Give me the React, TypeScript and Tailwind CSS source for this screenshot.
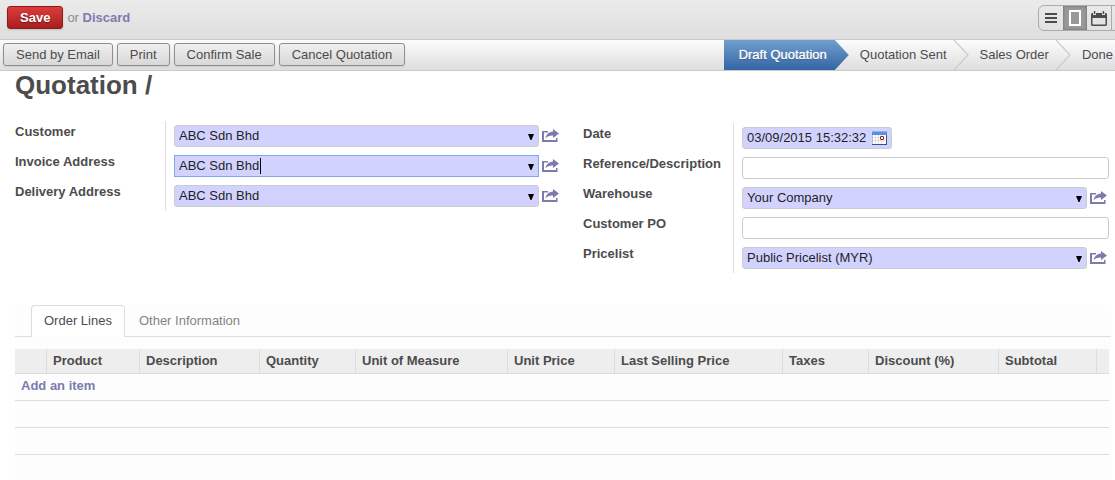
import React from "react";

function OpenIcon() {
  return (
    <svg viewBox="0 0 17 13" className="h-[13px] w-[17px]" fill="#7c7bad" aria-hidden="true">
      <path d="M0 2h6v1.500H2V11h12V9h1.500v4H0z" />
      <path d="M11 0l6 4.500-6 4.500V6.500C8 6.300 5.500 7 3.500 9.500 4 5.500 7 2.800 11 2.500z" />
    </svg>
  );
}

function CalendarIcon() {
  return (
    <svg viewBox="0 0 15 14" className="h-[14px] w-[15px]" aria-hidden="true">
      <rect width="15" height="14" fill="#35557f" />
      <rect width="14" height="13" fill="#a9bfe4" />
      <rect width="15" height="4" fill="#5b8fe0" />
      <rect width="15" height="1" fill="#8db4f0" />
      <rect x="1" y="4" width="13" height="9" fill="#fff" />
      <path d="M1 6.500h12M1 9.500h12M3.500 4v9M6.500 4v9M9.500 4v9" stroke="#dedede" />
      <rect x="8.500" y="5.500" width="3" height="3" rx="0.500" fill="#fff" stroke="#8c1c1c" />
    </svg>
  );
}

type FieldProps = { id: string; label: string; children: React.ReactNode };

function Field({ id, label, children }: FieldProps) {
  return (
    <div className="flex h-[30px]">
      <label htmlFor={id} className="w-[150px] shrink-0 font-bold leading-[22px]">
        {label}
      </label>
      <div className="flex min-w-0 flex-1 border-l border-[#dddddd] pl-2 pt-1">{children}</div>
    </div>
  );
}

function Relation({ id, label, value, editing = false }: { id: string; label: string; value: string; editing?: boolean }) {
  return (
    <Field id={id} label={label}>
      <div className="relative h-[22px] min-w-0 flex-1">
        {editing ? (
          <>
            <input
              id={id}
              role="combobox"
              aria-expanded="false"
              defaultValue={value}
              className="block h-[22px] w-full border border-[#80a8e8] bg-[#d2d2ff] px-1 pb-[2px] text-[#1f1f1f] outline-none"
            />
            <span className="absolute left-[86px] top-[3px] h-4 w-px bg-black" />
          </>
        ) : (
          <select
            id={id}
            defaultValue={value}
            className="block h-[22px] w-full appearance-none rounded-[3px] border border-[#cccccc] bg-[#d2d2ff] px-1 text-[#1f1f1f] outline-none"
          >
            <option>{value}</option>
          </select>
        )}
        <svg viewBox="0 0 6 6" className="pointer-events-none absolute right-[5px] top-[9px] size-[6px]" aria-hidden="true">
          <path d="M0 0h6L3.500 6h-1z" fill="#000" />
        </svg>
      </div>
      <button type="button" aria-label={`Open ${label}`} className="flex h-[22px] w-[22px] shrink-0 items-start pl-[3px] pt-1">
        <OpenIcon />
      </button>
    </Field>
  );
}

function TextField({ id, label }: { id: string; label: string }) {
  return (
    <Field id={id} label={label}>
      <input id={id} type="text" className="h-[22px] min-w-0 flex-1 rounded-[3px] border border-[#cccccc] bg-white px-1 outline-none" />
    </Field>
  );
}

const actions = ["Send by Email", "Print", "Confirm Sale", "Cancel Quotation"];

function Chevron() {
  return (
    <svg viewBox="0 0 16 30" className="h-[30px] w-4 shrink-0" fill="none" aria-hidden="true">
      <path d="M1 0L15 15L1 30" stroke="#cacaca" strokeWidth="1.200" />
    </svg>
  );
}

const columns = [
  { title: "", width: "w-[32px]" },
  { title: "Product", width: "w-[93px]" },
  { title: "Description", width: "w-[120px]" },
  { title: "Quantity", width: "w-[96px]" },
  { title: "Unit of Measure", width: "w-[152px]" },
  { title: "Unit Price", width: "w-[107px]" },
  { title: "Last Selling Price", width: "w-[168px]" },
  { title: "Taxes", width: "w-[86px]" },
  { title: "Discount (%)", width: "w-[130px]" },
  { title: "Subtotal", width: "w-[98px]" },
  { title: "", width: "w-[12px]" },
];

export default function App() {
  return (
    <div className="min-h-screen overflow-x-hidden bg-white font-['Liberation_Sans',Arial,sans-serif] text-[13px] leading-4 text-[#4c4c4c]">
      <header className="flex h-10 justify-between overflow-hidden border-b border-[#cacaca] bg-linear-to-b from-[#ebebeb] to-[#dedede] pl-[7px]">
        <div className="flex items-start gap-1 pt-[6px]">
          <button
            type="button"
            className="h-[23px] rounded-[3px] border border-[#8f1a1a] bg-linear-to-b from-[#dc3c3c] to-[#a81e1e] px-3 font-bold leading-[21px] text-white shadow-[0_1px_2px_rgba(0,0,0,0.15)] [text-shadow:0_1px_1px_rgba(0,0,0,0.4)]"
          >
            Save
          </button>
          <span className="leading-[23px] text-[#8d8d8d]">
            or{" "}
            <a href="#discard" className="font-bold text-[#7c7bad]">
              Discard
            </a>
          </span>
        </div>
        <div className="-mr-[21px] mt-[5px] flex h-[26px] overflow-hidden rounded-l-[6px] border border-[#ababab]">
          <button type="button" aria-label="List" className="flex w-6 items-center justify-center">
            <svg viewBox="0 0 12 10" className="h-[10px] w-3" fill="#4c4c4c" aria-hidden="true">
              <path d="M0 0h12v2H0zM0 4h12v2H0zM0 8h12v2H0z" />
            </svg>
          </button>
          <button type="button" aria-label="Form" aria-pressed="true" className="flex w-6 items-center justify-center bg-[#999999] shadow-[inset_0_0_3px_#666666]">
            <svg viewBox="0 0 12 16" className="h-4 w-3" fill="none" aria-hidden="true">
              <rect x="1" y="1" width="10" height="14" stroke="#fff" strokeWidth="2" />
            </svg>
          </button>
          <button type="button" aria-label="Calendar" className="flex w-6 items-center justify-center">
            <svg viewBox="0 0 16 15" className="h-[15px] w-4" fill="#4c4c4c" aria-hidden="true">
              <path fillRule="evenodd" d="M1 2h1v2h3V2h6v2h3V2h1l1 1v11l-1 1H1l-1-1V3zM1.500 7v6.500h13V7z" />
              <path d="M2.800 0h1.500v3H2.800zM11.700 0h1.500v3h-1.500z" />
            </svg>
          </button>
          <button type="button" aria-label="Graph" className="w-6 border-l border-[#ababab]" />
        </div>
      </header>

      <div className="flex h-[31px] justify-between overflow-hidden border-b border-[#cacaca] bg-linear-to-b from-[#fcfcfc] to-[#dedede] pl-[3px]">
        <div className="flex gap-1 pt-[3px]">
          {actions.map((a) => (
            <button
              key={a}
              type="button"
              className="h-[23px] rounded-[3px] border border-[#8f8f8f] bg-linear-to-b from-[#efefef] to-[#d8d8d8] px-3 leading-[21px] whitespace-nowrap shadow-[0_1px_2px_rgba(0,0,0,0.1)]"
            >
              {a}
            </button>
          ))}
        </div>
        <ol className="flex pr-[2px] leading-[30px] whitespace-nowrap">
          <li className="flex" aria-current="step">
            <span className="bg-linear-to-b from-[#729fcf] to-[#3465a4] pl-[15px] pr-2 text-white [text-shadow:0_1px_1px_rgba(0,0,0,0.3),0_0_1px_#ffffff]">
              Draft Quotation
            </span>
            <span className="w-[14px] bg-linear-to-b from-[#729fcf] to-[#3465a4] [clip-path:polygon(0_0,100%_50%,0_100%)]" />
          </li>
          <li className="flex pl-[11px]">
            <span className="pr-[6px]">Quotation Sent</span>
            <Chevron />
          </li>
          <li className="flex pl-[11px]">
            <span className="pr-[6px]">Sales Order</span>
            <Chevron />
          </li>
          <li className="pl-[11px]">Done</li>
        </ol>
      </div>

      <main className="pl-[15px] pr-[6px]">
        <h1 className="text-[26px] font-bold leading-7">Quotation /</h1>

        <form className="grid grid-cols-[546fr_526fr] gap-x-[22px] pt-[22px]">
          <div>
            <Relation id="customer" label="Customer" value="ABC Sdn Bhd" />
            <Relation id="invoice" label="Invoice Address" value="ABC Sdn Bhd" editing />
            <Relation id="delivery" label="Delivery Address" value="ABC Sdn Bhd" />
          </div>
          <div className="pt-[2px]">
            <Field id="date" label="Date">
              <div className="relative h-[22px] w-[150px]">
                <input
                  id="date"
                  type="text"
                  defaultValue="03/09/2015 15:32:32"
                  className="block h-[22px] w-full rounded-[3px] border border-[#cccccc] bg-[#d2d2ff] pb-[2px] pl-1 text-[#1f1f1f] outline-none"
                />
                <button type="button" aria-label="Choose date" className="absolute right-[5px] top-1">
                  <CalendarIcon />
                </button>
              </div>
            </Field>
            <TextField id="reference" label="Reference/Description" />
            <Relation id="warehouse" label="Warehouse" value="Your Company" />
            <TextField id="customer-po" label="Customer PO" />
            <Relation id="pricelist" label="Pricelist" value="Public Pricelist (MYR)" />
          </div>
        </form>
      </main>

      <section className="mt-8 ml-[15px] mr-1 bg-[#fdfdfd] pb-6">
        <div role="tablist" className="flex h-8 border-b border-[#dddddd] pl-4">
          <button type="button" role="tab" aria-selected="true" className="-mb-px h-8 rounded-t-[4px] border border-b-0 border-[#dddddd] bg-white px-3 pb-[2px] whitespace-nowrap">
            Order Lines
          </button>
          <button type="button" role="tab" aria-selected="false" className="px-[14px] text-[#848484] whitespace-nowrap">
            Other Information
          </button>
        </div>
        <div className="pr-[2px] pt-3">
          <table className="w-full table-fixed border-separate border-spacing-0">
            <thead>
              <tr className="h-[25px] bg-[#eeeeee]">
                {columns.map((c, i) => (
                  <th
                    key={i}
                    scope="col"
                    className={`${c.width} border-r border-b border-[#dddddd] p-0 pl-[6px] text-left font-bold whitespace-nowrap last:border-r-0`}
                  >
                    {c.title}
                  </th>
                ))}
              </tr>
            </thead>
            <tbody>
              <tr className="h-[27px]">
                <td colSpan={11} className="border-b border-[#dddddd] p-0 pb-[2px] pl-[6px]">
                  <a href="#add" className="font-bold text-[#7c7bad]">
                    Add an item
                  </a>
                </td>
              </tr>
              {[1, 2].map((n) => (
                <tr key={n} className="h-[27px]">
                  <td colSpan={11} className="border-b border-[#dddddd] p-0" />
                </tr>
              ))}
              <tr className="h-[20px]">
                <td colSpan={11} className="p-0" />
              </tr>
            </tbody>
          </table>
        </div>
      </section>
    </div>
  );
}
